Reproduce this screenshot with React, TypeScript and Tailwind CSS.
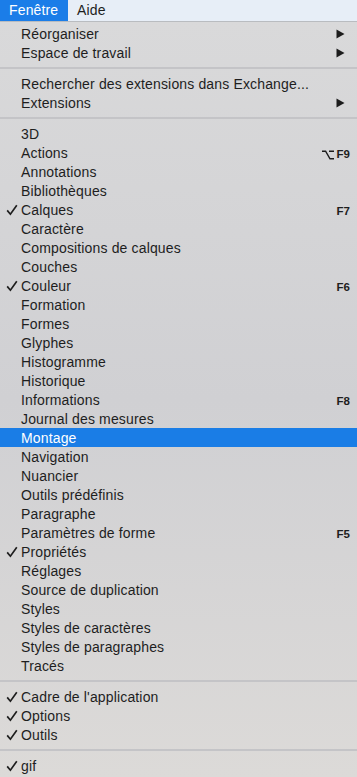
import React from "react";

type Entry =
  | { sep: true }
  | { label: string; check?: boolean; key?: string; alt?: boolean; sub?: boolean; active?: boolean };

const entries: Entry[] = [
  { label: "Réorganiser", sub: true },
  { label: "Espace de travail", sub: true },
  { sep: true },
  { label: "Rechercher des extensions dans Exchange..." },
  { label: "Extensions", sub: true },
  { sep: true },
  { label: "3D" },
  { label: "Actions", key: "F9", alt: true },
  { label: "Annotations" },
  { label: "Bibliothèques" },
  { label: "Calques", check: true, key: "F7" },
  { label: "Caractère" },
  { label: "Compositions de calques" },
  { label: "Couches" },
  { label: "Couleur", check: true, key: "F6" },
  { label: "Formation" },
  { label: "Formes" },
  { label: "Glyphes" },
  { label: "Histogramme" },
  { label: "Historique" },
  { label: "Informations", key: "F8" },
  { label: "Journal des mesures" },
  { label: "Montage", active: true },
  { label: "Navigation" },
  { label: "Nuancier" },
  { label: "Outils prédéfinis" },
  { label: "Paragraphe" },
  { label: "Paramètres de forme", key: "F5" },
  { label: "Propriétés", check: true },
  { label: "Réglages" },
  { label: "Source de duplication" },
  { label: "Styles" },
  { label: "Styles de caractères" },
  { label: "Styles de paragraphes" },
  { label: "Tracés" },
  { sep: true },
  { label: "Cadre de l'application", check: true },
  { label: "Options", check: true },
  { label: "Outils", check: true },
  { sep: true },
  { label: "gif", check: true },
];

const Arrow = () => (
  <svg width="9" height="10" viewBox="0 0 9 10" className="absolute right-[12px] top-[5px]">
    <path d="M0.5 0.5 L8.5 5 L0.5 9.5 Z" fill="#1c1c1c" />
  </svg>
);

const Check = () => (
  <svg width="12" height="12" viewBox="0 0 12 12" className="absolute left-[6px] top-[4px]">
    <path d="M1.2 6.4 L4.4 10.2 L10.8 1.2" stroke="#1e1e1e" strokeWidth="1.7" fill="none" />
  </svg>
);

export default function App() {
  return (
    <div
      className="w-[357px] h-[777px] overflow-hidden text-[14px] tracking-[0.15px] text-[#1e1e1e]"
      style={{ fontFamily: '"Liberation Sans", Arial, sans-serif' }}
    >
      {/* barre de menus */}
      <div className="h-[22px] flex items-stretch bg-[#e7eef7] border-b border-[#b9bcc0]">
        <div className="w-[68px] bg-[#1b7de8] text-white flex items-center pl-[9px]">Fenêtre</div>
        <div className="flex items-center pl-[9px]">Aide</div>
      </div>

      <div className="bg-gradient-to-b from-[#d9d9da] via-[#d0d0d3] to-[#dcdad8] h-[755px] pt-[2px]">
        {entries.map((e, i) =>
          "sep" in e ? (
            <div key={i} className="h-[12px] flex items-center">
              <div className="w-full h-[2px] bg-[#c4c4c7]" />
            </div>
          ) : (
            <div
              key={i}
              className={`relative h-[19px] flex items-center pl-[21px] pt-[1px] ${
                e.active ? "bg-[#1a7de6] text-white" : ""
              }`}
            >
              {e.check && <Check />}
              <span>{e.label}</span>
              {e.key && (
                <span className="absolute right-[7px] top-[3px] text-[11.5px] font-semibold tracking-normal flex items-center gap-[3px]">
                  {e.alt && (
                    <svg width="12" height="10" viewBox="0 0 12 10">
                      <path d="M0 1.2 H3.6 L8 8.8 H12 M7 1.2 H12" stroke="#1c1c1c" strokeWidth="1.4" fill="none" />
                    </svg>
                  )}
                  {e.key}
                </span>
              )}
              {e.sub && <Arrow />}
            </div>
          )
        )}
      </div>
    </div>
  );
}
